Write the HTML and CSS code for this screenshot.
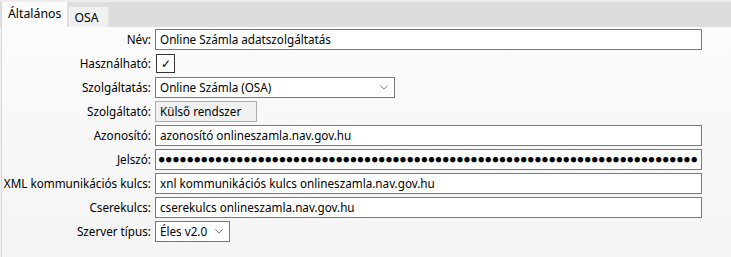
FILE: index.html
```html
<!DOCTYPE html>
<html lang="hu">
<head>
    <meta charset="UTF-8">
    <title>Online Számla beállítások</title>
    <link rel="stylesheet" href="styles.css">
</head>
<body>
    <div class="tabs">
        <div class="tab-strip">
            <div class="tab active">Általános</div>
            <div class="tab">OSA</div>
        </div>
        <div class="tab-panel">
            <div class="form-grid">
                <label class="field-label">Név:</label>
                <div class="field"><div class="input wide">Online Számla adatszolgáltatás</div></div>

                <label class="field-label">Használható:</label>
                <div class="field"><div class="checkbox">&#10003;</div></div>

                <label class="field-label">Szolgáltatás:</label>
                <div class="field">
                    <div class="input select service">
                        <span>Online Számla (OSA)</span>
                        <svg class="chevron" viewBox="0 0 10 6" fill="none" stroke="currentColor" stroke-width="1">
                            <polyline points="0.5,0.5 5,5 9.5,0.5"/>
                        </svg>
                    </div>
                </div>

                <label class="field-label">Szolgáltató:</label>
                <div class="field"><div class="input readonly">Külső rendszer</div></div>

                <label class="field-label">Azonosító:</label>
                <div class="field"><div class="input wide">azonosító onlineszamla.nav.gov.hu</div></div>

                <label class="field-label">Jelszó:</label>
                <div class="field"><div class="input wide password">&#9679;&#9679;&#9679;&#9679;&#9679;&#9679;&#9679;&#9679;&#9679;&#9679;&#9679;&#9679;&#9679;&#9679;&#9679;&#9679;&#9679;&#9679;&#9679;&#9679;&#9679;&#9679;&#9679;&#9679;&#9679;&#9679;&#9679;&#9679;&#9679;&#9679;&#9679;&#9679;&#9679;&#9679;&#9679;&#9679;&#9679;&#9679;&#9679;&#9679;&#9679;&#9679;&#9679;&#9679;&#9679;&#9679;&#9679;&#9679;&#9679;&#9679;&#9679;&#9679;&#9679;&#9679;&#9679;&#9679;&#9679;&#9679;&#9679;&#9679;&#9679;&#9679;&#9679;&#9679;&#9679;&#9679;&#9679;&#9679;&#9679;&#9679;&#9679;&#9679;&#9679;&#9679;&#9679;&#9679;</div></div>

                <label class="field-label">XML kommunikációs kulcs:</label>
                <div class="field"><div class="input wide">xnl kommunikációs kulcs onlineszamla.nav.gov.hu</div></div>

                <label class="field-label">Cserekulcs:</label>
                <div class="field"><div class="input wide">cserekulcs onlineszamla.nav.gov.hu</div></div>

                <label class="field-label">Szerver típus:</label>
                <div class="field">
                    <div class="input select server">
                        <span>Éles v2.0</span>
                        <svg class="chevron" viewBox="0 0 10 6" fill="none" stroke="currentColor" stroke-width="1">
                            <polyline points="0.5,0.5 5,5 9.5,0.5"/>
                        </svg>
                    </div>
                </div>
            </div>
        </div>
    </div>
</body>
</html>
```

FILE: styles.css
```css
* {
    margin: 0;
    padding: 0;
    box-sizing: border-box;
}

body {
    width: 731px;
    height: 257px;
    overflow: hidden;
    background: #f0f0f0;
    color: #000;
    font-family: "Noto Sans", "Open Sans", sans-serif;
    font-size: 11.7px;
}

.tabs {
    display: flex;
    flex-direction: column;
    height: 100%;
}

.tab-strip {
    display: flex;
    align-items: flex-end;
    height: 27px;
    padding: 2px 0 0 2px;
    background: #dddddd;
    border-top: 2px solid #ededed;
}

.tab {
    height: 21px;
    padding: 1px 9px 0 5px;
    background: #f0f0f0;
    border: 1px solid #e3e3e3;
    border-bottom: none;
    line-height: 19px;
    font-size: 12.3px;
}

.tab.active {
    height: 25px;
    padding: 1px 5px 0 5px;
    background: #fbfbfb;
    border-color: #fbfbfb;
    margin-right: 1px;
}

.tab-panel {
    flex: 1;
    background: linear-gradient(#fbfbfb, #f4f4f4);
    border-left: 1px solid #d9d9d9;
    margin-left: 1px;
    padding: 2px 0 0 0;
}

.form-grid {
    display: grid;
    grid-template-columns: 149px 1fr;
    grid-auto-rows: 24px;
    column-gap: 4px;
}

.field-label {
    text-align: right;
    line-height: 21px;
    white-space: nowrap;
}

.field {
    display: flex;
    align-items: flex-start;
}

.input {
    height: 21px;
    padding: 0 4px;
    background: #fff;
    border: 1px solid #7a7a7a;
    line-height: 19px;
    white-space: nowrap;
    overflow: hidden;
}

.input.wide {
    width: 547px;
}

.input.readonly {
    width: 102px;
    background: #f0f0f0;
    border-color: #adadad;
}

.input.password {
    padding-left: 3px;
    font-family: "DejaVu Sans Mono", monospace;
    font-size: 9px;
    letter-spacing: 1.68px;
}

.select {
    display: flex;
    align-items: center;
    justify-content: space-between;
    padding-right: 6px;
}

.select.service {
    width: 240px;
}

.select.server {
    width: 75px;
}

.chevron {
    width: 8px;
    height: 5px;
    color: #555;
}

.checkbox {
    width: 19px;
    height: 19px;
    margin: 1px 0 0 1px;
    border: 1px solid #333;
    background: #fff;
    text-align: center;
    line-height: 17px;
    font-size: 12px;
}
```
